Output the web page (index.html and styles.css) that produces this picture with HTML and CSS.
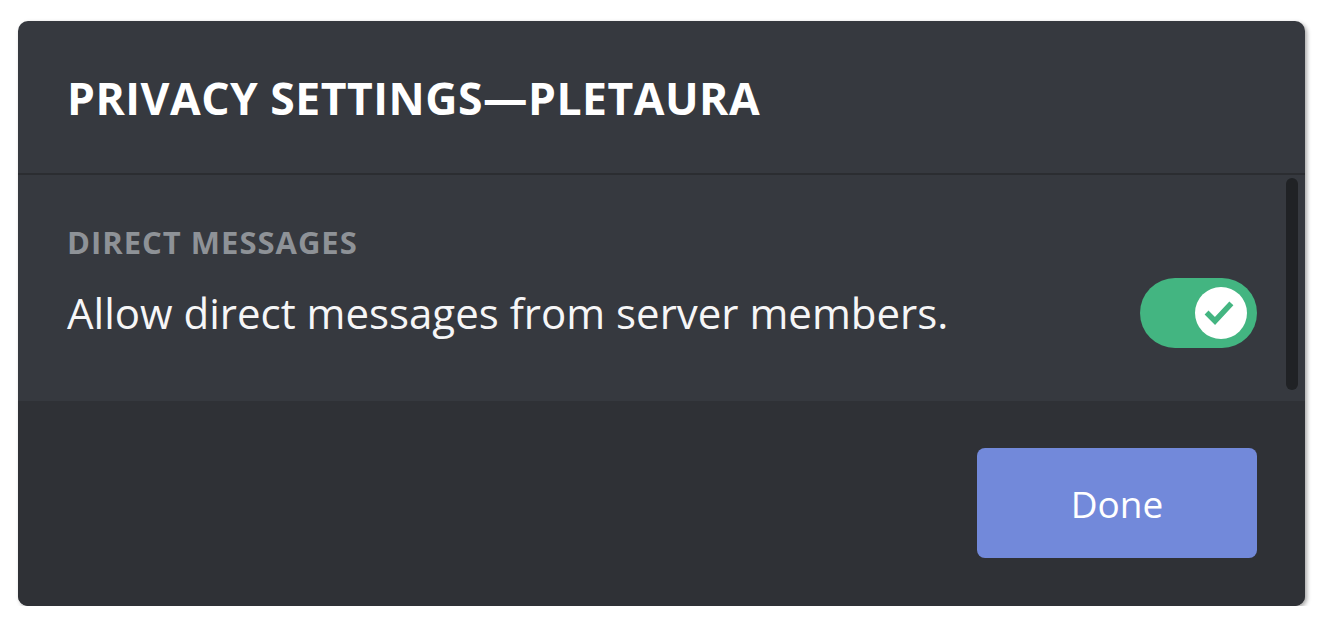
FILE: index.html
```html
<!DOCTYPE html>
<html lang="en">
<head>
  <meta charset="UTF-8">
  <meta name="viewport" content="width=device-width, initial-scale=1.0">
  <title>Privacy Settings</title>

  <link rel="stylesheet" href="styles.css">
</head>
<body>

  <div class="modal">
    <div class="modal-header">
      <h2 class="modal-title">Privacy Settings—Pletaura</h2>
    </div>

    <div class="modal-body">
      <div class="modal-content">
        <h5 class="section-label">Direct Messages</h5>

        <div class="setting-row">
          <span class="setting-text">Allow direct messages from server members.</span>

          <div class="toggle toggle-on">
            <div class="toggle-knob">
              <svg width="52" height="52" viewBox="0 0 52 52">
                <path d="M13.5 27.5 L20 34 L34.5 18.5" fill="none" stroke="#43b581" stroke-width="5.5" stroke-linecap="square"/>
              </svg>
            </div>
          </div>
        </div>
      </div>

      <div class="scrollbar"></div>
    </div>

    <div class="modal-footer">
      <button class="button-done">Done</button>
    </div>
  </div>

</body>
</html>
```

FILE: styles.css
```css
* {
  margin: 0;
  padding: 0;

  box-sizing: border-box;
  font-family: 'Open Sans', sans-serif;
}

body {
  padding: 21px 25px 0 18px;
  background: #ffffff;
}

.modal {
  display: flex;
  flex-direction: column;

  width: 1287px;
  height: 585px;

  background: #36393f;
  border-radius: 10px;
  box-shadow: 2px 2px 4px rgba(0, 0, 0, 0.35);
  overflow: hidden;
}

.modal-header {
  display: flex;
  align-items: center;

  height: 154px;
  padding: 0 49px;

  border-bottom: 2px solid #2b2d31;
}

.modal-title {
  color: #ffffff;

  font-size: 44.5px;
  font-weight: 700;
  text-transform: uppercase;
  letter-spacing: 0.5px;
}

.modal-body {
  display: flex;
  height: 226px;
}

.modal-content {
  flex: 1;
  padding: 49px 29px 0 49px;
}

.section-label {
  color: #8e9297;

  font-size: 31px;
  font-weight: 700;
  line-height: 36px;
  letter-spacing: 1px;
  text-transform: uppercase;
}

.setting-row {
  display: flex;
  align-items: center;
  justify-content: space-between;

  margin-top: 18px;
}

.setting-text {
  color: #f6f6f7;

  font-size: 42px;
  font-weight: 500;
  line-height: 60px;
}

.toggle {
  display: flex;
  align-items: center;
  justify-content: flex-end;

  width: 117px;
  height: 70px;
  padding: 0 10px;

  border-radius: 35px;
  background: #72767d;
}

.toggle-on {
  background: #43b581;
}

.toggle-knob {
  display: flex;
  align-items: center;
  justify-content: center;

  width: 52px;
  height: 52px;

  border-radius: 50%;
  background: #ffffff;
}

.scrollbar {
  width: 12px;
  margin: 3px 7px 11px 0;

  border-radius: 6px;
  background: #202225;
}

.modal-footer {
  display: flex;
  align-items: flex-start;
  justify-content: flex-end;

  flex: 1;
  padding: 47px 48px 0 0;

  background: #2f3136;
}

.button-done {
  width: 280px;
  height: 110px;

  border: none;
  border-radius: 8px;
  background: #7289da;

  color: #ffffff;
  font-family: 'Open Sans', sans-serif;
  font-size: 37px;
  font-weight: 500;

  cursor: pointer;
}
```
